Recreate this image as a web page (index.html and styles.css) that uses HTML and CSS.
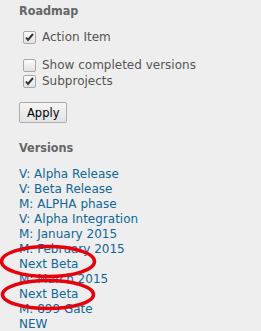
FILE: index.html
```html
<!DOCTYPE html>
<html lang="en">
<head>
  <meta charset="UTF-8" />
  <title>Roadmap</title>
  <link rel="stylesheet" href="styles.css">
</head>
<body>
  <div id="sidebar">
    <form>
      <h3>Roadmap</h3>
      <ul class="trackers">
        <li><label class="check"><input type="checkbox" checked> Action Item</label></li>
      </ul>
      <label class="check"><input type="checkbox"> Show completed versions</label>
      <label class="check"><input type="checkbox" checked> Subprojects</label>
      <p class="buttons"><button type="submit">Apply</button></p>
    </form>

    <h3>Versions</h3>
    <ul class="versions">
      <li><a href="#">V: Alpha Release</a></li>
      <li><a href="#">V: Beta Release</a></li>
      <li><a href="#">M: ALPHA phase</a></li>
      <li><a href="#">V: Alpha Integration</a></li>
      <li><a href="#">M: January 2015</a></li>
      <li><a href="#">M: February 2015</a></li>
      <li><a href="#">Next Beta</a></li>
      <li><a href="#">M: March 2015</a></li>
      <li><a href="#">Next Beta</a></li>
      <li><a href="#">M: 899 Gate</a></li>
      <li><a href="#">NEW</a></li>
    </ul>
  </div>

  <!-- red marks drawn over the screenshot -->
  <svg class="marks" width="261" height="331" viewBox="0 0 261 331">
    <ellipse cx="48" cy="261.5" rx="46.5" ry="15" />
    <ellipse cx="48" cy="294.5" rx="45.5" ry="14" />
  </svg>
</body>
</html>
```

FILE: styles.css
```css
body { margin: 0; background: #eeeeee; color: #555; font-family: "DejaVu Sans", Verdana, sans-serif; font-size: 12px; overflow: hidden; }
#sidebar { padding: 3px 0 0 19px; }
h3 { margin: 0; height: 16px; line-height: 16px; font-family: "DejaVu Sans Condensed", "DejaVu Sans", sans-serif; font-size: 12.5px; font-weight: bold; color: #666; }
ul { list-style: none; margin: 0; padding: 0; }
.trackers { margin: 10px 0 12px; }
.check { display: flex; align-items: center; height: 16px; line-height: 16px; white-space: nowrap; }
.check input { appearance: none; -webkit-appearance: none; width: 13px; height: 13px; margin: 0 6px 0 4px; border: 1px solid #a9a9a9; border-radius: 2px; background: linear-gradient(#fbfbfb, #e3e3e3); box-sizing: border-box; }
.check input:checked { background: url("data:image/svg+xml,%3Csvg xmlns='http://www.w3.org/2000/svg' width='11' height='11'%3E%3Cpath d='M2 5.5l2 2.5 5-6' fill='none' stroke='%23333' stroke-width='2'/%3E%3C/svg%3E") center no-repeat, linear-gradient(#fbfbfb, #e3e3e3); }
.buttons { margin: 13px 0 17px; }
button { height: 21px; padding: 0 7px; border: 1px solid #acacac; border-radius: 2px; background: linear-gradient(#f4f4f4, #e4e4e4); color: #000; font-family: "DejaVu Sans", sans-serif; font-size: 11.5px; }
.versions { margin-top: 11px; line-height: 15px; }
.versions a { color: #169; text-decoration: none; }
.marks { position: absolute; left: 0; top: 0; pointer-events: none; }
.marks ellipse { fill: none; stroke: #e8000b; stroke-width: 3.5; }
```
